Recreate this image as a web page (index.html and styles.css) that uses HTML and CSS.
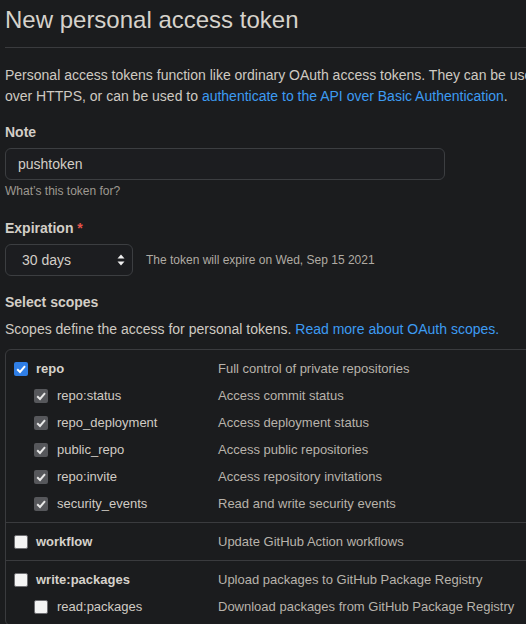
FILE: index.html
```html
<!DOCTYPE html>
<html>
<head>
<meta charset="utf-8">
<link rel="stylesheet" href="styles.css">
</head>
<body>
<div class="page">
  <div class="subhead">
    <h2 class="subhead-title">New personal access token</h2>
  </div>
  <p class="intro">Personal access tokens function like ordinary OAuth access tokens. They can be used instead of a password for Git<br>over HTTPS, or can be used to <a href="#">authenticate to the API over Basic Authentication</a>.</p>

  <div class="field">
    <label class="label">Note</label>
    <div class="input">pushtoken</div>
    <p class="note">What’s this token for?</p>
  </div>

  <div class="field field-exp">
    <label class="label">Expiration <span class="req">*</span></label>
    <div class="exp-row">
      <div class="select">
        <span>30 days</span>
        <svg class="arrows" width="8" height="12" viewBox="0 0 8 12"><path d="M4 0.5 L7.5 4.5 H0.5 Z M4 11.5 L7.5 7.5 H0.5 Z" fill="#f0f0f0"/></svg>
      </div>
      <span class="exp-note">The token will expire on Wed, Sep 15 2021</span>
    </div>
  </div>

  <div class="scopes-head">
    <h3 class="label">Select scopes</h3>
    <p class="scopes-desc">Scopes define the access for personal tokens. <a href="#">Read more about OAuth scopes.</a></p>
  </div>

  <div class="scopes">
    <div class="group">
      <div class="row">
        <div class="name"><span class="cb cb-blue"><svg viewBox="0 0 14 14"><path d="M3.2 7.3 L6 10 L11 4.2" fill="none" stroke="#fff" stroke-width="2"/></svg></span><b>repo</b></div>
        <div class="desc">Full control of private repositories</div>
      </div>
      <div class="row sub">
        <div class="name"><span class="cb cb-grey"><svg viewBox="0 0 14 14"><path d="M3.2 7.3 L6 10 L11 4.2" fill="none" stroke="#e8e8e8" stroke-width="2"/></svg></span>repo:status</div>
        <div class="desc">Access commit status</div>
      </div>
      <div class="row sub">
        <div class="name"><span class="cb cb-grey"><svg viewBox="0 0 14 14"><path d="M3.2 7.3 L6 10 L11 4.2" fill="none" stroke="#e8e8e8" stroke-width="2"/></svg></span>repo_deployment</div>
        <div class="desc">Access deployment status</div>
      </div>
      <div class="row sub">
        <div class="name"><span class="cb cb-grey"><svg viewBox="0 0 14 14"><path d="M3.2 7.3 L6 10 L11 4.2" fill="none" stroke="#e8e8e8" stroke-width="2"/></svg></span>public_repo</div>
        <div class="desc">Access public repositories</div>
      </div>
      <div class="row sub">
        <div class="name"><span class="cb cb-grey"><svg viewBox="0 0 14 14"><path d="M3.2 7.3 L6 10 L11 4.2" fill="none" stroke="#e8e8e8" stroke-width="2"/></svg></span>repo:invite</div>
        <div class="desc">Access repository invitations</div>
      </div>
      <div class="row sub">
        <div class="name"><span class="cb cb-grey"><svg viewBox="0 0 14 14"><path d="M3.2 7.3 L6 10 L11 4.2" fill="none" stroke="#e8e8e8" stroke-width="2"/></svg></span>security_events</div>
        <div class="desc">Read and write security events</div>
      </div>
    </div>
    <div class="group">
      <div class="row">
        <div class="name"><span class="cb cb-empty"></span><b>workflow</b></div>
        <div class="desc">Update GitHub Action workflows</div>
      </div>
    </div>
    <div class="group">
      <div class="row">
        <div class="name"><span class="cb cb-empty"></span><b>write:packages</b></div>
        <div class="desc">Upload packages to GitHub Package Registry</div>
      </div>
      <div class="row sub">
        <div class="name"><span class="cb cb-empty"></span>read:packages</div>
        <div class="desc">Download packages from GitHub Package Registry</div>
      </div>
    </div>
  </div>
</div>
</body>
</html>
```

FILE: styles.css
```css
html, body {
  margin: 0;
  padding: 0;
  background: #1b1c1e;
  overflow: hidden;
}
body {
  font-family: "Liberation Sans", Arial, sans-serif;
  font-size: 14px;
  line-height: 21px;
  color: #cfcac2;
}
.page {
  width: 800px;
  padding: 5px 0 0 5px;
}
a {
  color: #3d9bf2;
  text-decoration: none;
}
.subhead {
  border-bottom: 1px solid #3a3b3e;
  padding-bottom: 12px;
}
.subhead-title {
  margin: 0;
  font-size: 24px;
  font-weight: normal;
  line-height: 30px;
  color: #d6d2cb;
}
.intro {
  margin: 17px 0 0;
  white-space: nowrap;
}
.field {
  margin-top: 15px;
  display: flex;
  flex-direction: column;
  align-items: flex-start;
}
.label {
  display: block;
  margin: 0;
  font-size: 14px;
  font-weight: bold;
  line-height: 21px;
  color: #d3cec7;
}
.req {
  color: #e5534b;
}
.input {
  box-sizing: border-box;
  margin-top: 5px;
  width: 440px;
  height: 32px;
  border: 1px solid #3c3e41;
  border-radius: 6px;
  background: #1c1d20;
  padding: 0 12px;
  line-height: 30px;
  font-size: 14px;
  color: #d3cec7;
}
.note {
  margin: 2px 0 0;
  font-size: 12px;
  line-height: 18px;
  color: #9e9991;
}
.field-exp {
  margin-top: 18px;
}
.exp-row {
  margin-top: 5px;
  display: flex;
  align-items: center;
}
.select {
  box-sizing: border-box;
  width: 128px;
  height: 32px;
  border: 1px solid #3c3e41;
  border-radius: 6px;
  background: #1c1d20;
  padding: 0 7px 0 16px;
  display: flex;
  align-items: center;
  justify-content: space-between;
  font-size: 14px;
  color: #d3cec7;
}
.arrows {
  display: block;
}
.exp-note {
  margin-left: 13px;
  font-size: 12px;
  color: #b0aba3;
}
.scopes-head {
  margin-top: 16px;
}
.scopes-desc {
  margin: 6px 0 0;
}
.scopes {
  margin-top: 9px;
  border: 1px solid #3a3b3e;
  border-radius: 6px;
  font-size: 13px;
}
.group {
  padding: 5px 0;
  border-top: 1px solid #3a3b3e;
}
.group:first-child {
  border-top: 0;
}
.row {
  display: flex;
  align-items: center;
  height: 27px;
  padding-left: 8px;
}
.name {
  width: 204px;
  display: flex;
  align-items: center;
  color: #d0cbc4;
}
.name b {
  color: #d6d2cb;
}
.sub .name {
  padding-left: 20px;
  width: 184px;
}
.desc {
  color: #b8b3ab;
}
.cb {
  box-sizing: border-box;
  width: 14px;
  height: 14px;
  border-radius: 2px;
  margin-right: 8px;
  flex: none;
  display: flex;
}
.sub .cb {
  margin-right: 9px;
}
.cb svg {
  width: 14px;
  height: 14px;
}
.cb-blue {
  background: #2f7ee6;
}
.cb-grey {
  background: #56575b;
}
.cb-empty {
  background: #f4f4f4;
  border: 1px solid #6e6e72;
}
```
